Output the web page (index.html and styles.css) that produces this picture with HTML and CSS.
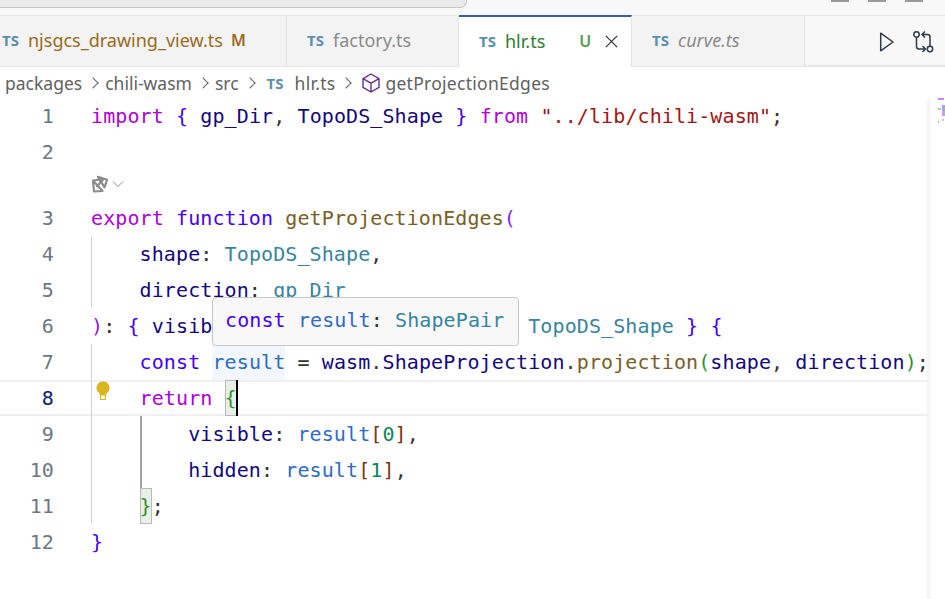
FILE: index.html
```html
<!DOCTYPE html>
<html lang="en">
<head>
<meta charset="utf-8">
<title>hlr.ts</title>
<link rel="stylesheet" href="styles.css">
</head>
<body>
<div class="app">
  <header class="titlebar">
    <div class="search"></div>
    <div class="winctl"><i></i><i></i><i></i></div>
  </header>
  <nav class="tabs">
    <div class="tab t1"><span class="ts">TS</span><span class="name mod">njsgcs_drawing_view.ts</span><span class="badge mod">M</span></div>
    <div class="tab t2"><span class="ts">TS</span><span class="name dim">factory.ts</span></div>
    <div class="tab t3 active"><span class="ts">TS</span><span class="name new">hlr.ts</span><span class="badge new">U</span>
      <svg class="close" viewBox="0 0 16 16" width="15" height="15"><path d="M2 2l12 12M14 2L2 14" stroke="#333" stroke-width="1.400" fill="none"/></svg>
    </div>
    <div class="tab t4"><span class="ts">TS</span><span class="name dim it">curve.ts</span></div>
    <div class="actions">
      <svg viewBox="0 0 20 20" width="20" height="20"><path d="M3.700 1.200v17.600L16 10z" fill="none" stroke="#2f3a4a" stroke-width="1.500" stroke-linejoin="round"/></svg>
      <svg viewBox="0 0 22 22" width="22" height="22"><g fill="none" stroke="#2f3a4a" stroke-width="1.500"><circle cx="4.500" cy="3.500" r="2.700"/><circle cx="18" cy="18" r="2.700"/><path d="M4.500 6.200v9.300c0 1.800 1 2.500 2.500 2.500h5.500M10.500 15l3 3-3 3M18 15.300V6c0-1.800-1-2.500-2.500-2.500H10M13 .5l-3 3 3 3"/></g></svg>
    </div>
  </nav>
  <div class="crumbs">
    <span>packages</span><b class="sep"></b><span>chili-wasm</span><b class="sep"></b><span>src</span><b class="sep"></b>
    <span class="ts small">TS</span><span class="wide">hlr.ts</span><b class="sep"></b>
    <svg class="cube" viewBox="0 0 20 20" width="20" height="20"><path d="M10 1l8 4.600v8.800L10 19l-8-4.600V5.600zM2 5.600l8 4.600 8-4.600M10 10.200V19" fill="none" stroke="#652d90" stroke-width="1.400"/></svg>
    <span class="wide">getProjectionEdges</span>
  </div>
  <main class="editor">
    <div class="line"><span class="num">1</span><code class="code"><span class="kw">import</span> <span class="b1">{</span> <span class="var">gp_Dir</span>, <span class="var">TopoDS_Shape</span> <span class="b1">}</span> <span class="kw">from</span> <span class="str">"../lib/chili-wasm"</span>;</code></div>
    <div class="line"><span class="num">2</span><code class="code"></code></div>
    <div class="lens">
      <svg viewBox="0 0 18 18" width="18" height="18"><g fill="none" stroke="#8c8c8c" stroke-width="2.200" stroke-linejoin="round"><path d="M7 1.800l9 3-2.500 7.500z"/><path d="M2 5.500l9.500 10.500-8.500.5z"/><path d="M2.500 5.500l10-1.500-7 8"/></g></svg>
      <svg viewBox="0 0 12 8" width="12" height="8"><path d="M1 1.500l5 5 5-5" fill="none" stroke="#8a8a8a" stroke-width="1"/></svg>
    </div>
    <div class="line"><span class="num">3</span><code class="code"><span class="kw">export</span> <span class="st">function</span> <span class="fn">getProjectionEdges</span><span class="b0">(</span></code></div>
    <div class="line g1"><span class="num">4</span><code class="code">    <span class="var">shape</span>: <span class="ty">TopoDS_Shape</span>,</code></div>
    <div class="line g1"><span class="num">5</span><code class="code">    <span class="var">direction</span>: <span class="ty">gp_Dir</span></code></div>
    <div class="line"><span class="num">6</span><code class="code"><span class="b0">)</span>: <span class="b1">{</span> <span class="var">visible</span>: <span class="ty">TopoDS_Shape</span>; <span class="var">hidden</span>: <span class="ty">TopoDS_Shape</span> <span class="b1">}</span> <span class="b1">{</span></code></div>
    <div class="line g1"><span class="num">7</span><code class="code">    <span class="st">const</span> <span class="cv hl">result</span> = <span class="var">wasm</span>.<span class="var">ShapeProjection</span>.<span class="fn">projection</span><span class="b2">(</span><span class="var">shape</span>, <span class="var">direction</span><span class="b2">)</span>;</code></div>
    <div class="line g1 current">
      <svg class="bulb" viewBox="0 0 14 20" width="14" height="20"><path d="M7 0.500a6.500 6.500 0 0 1 4 11.600c-.8.700-1 1.300-1 1.900H4c0-.6-.2-1.200-1-1.900A6.500 6.500 0 0 1 7 .500z" fill="#dcb51e"/><path d="M4.500 14h5v4.500h-5z" fill="#fff" stroke="#dcb51e" stroke-width="1.200"/></svg>
      <span class="num now">8</span><code class="code">    <span class="kw">return</span> <span class="b3 match">{</span><span class="caret"></span></code></div>
    <div class="line g1 g2"><span class="num">9</span><code class="code">        <span class="var">visible</span>: <span class="cv">result</span><span class="b4">[</span><span class="n">0</span><span class="b4">]</span>,</code></div>
    <div class="line g1 g2"><span class="num">10</span><code class="code">        <span class="var">hidden</span>: <span class="cv">result</span><span class="b4">[</span><span class="n">1</span><span class="b4">]</span>,</code></div>
    <div class="line g1"><span class="num">11</span><code class="code">    <span class="b3 match">}</span>;</code></div>
    <div class="line"><span class="num">12</span><code class="code"><span class="b1">}</span></code></div>
    <div class="tooltip"><span class="st">const</span> <span class="cv">result</span>: <span class="ty">ShapePair</span></div>
    <div class="minimap">
      <i class="m1"></i><i class="m2"></i><i class="m3"></i><i class="m4"></i><i class="m5"></i><i class="m6"></i>
    </div>
  </main>
</div>
</body>
</html>
```
FILE: styles.css
```css
* { box-sizing: border-box; }
html, body { margin: 0; height: 100%; background: #fff; overflow: hidden; }
.app { width: 945px; height: 599px; display: flex; flex-direction: column; overflow: hidden; font-family: "Noto Sans", sans-serif; }

.titlebar { height: 15px; flex: none; background: #f8f8f8; position: relative; display: flex; justify-content: space-between; }
.search { width: 467px; height: 8px; background: #ebebeb; border-bottom: 1px solid #c6c6c6; border-right: 1px solid #c6c6c6; border-radius: 0 0 7px 0; }
.winctl { display: flex; gap: 19px; margin-right: 22px; }
.winctl i { width: 18px; height: 2px; background: #9a9a9a; }

.tabs { height: 52px; flex: none; display: flex; background: #f8f8f8; border-top: 1px solid #e6e6e6; border-bottom: 2px solid #e6e6e6; }
.tab { height: 50px; flex: none; display: flex; align-items: center; background: #f3f3f3; border-right: 1px solid #e3e3e3; font-size: 18px; position: relative; padding-bottom: 2px; }
.t1 { width: 287px; padding-left: 2px; }
.t2 { width: 172px; padding-left: 20px; }
.t3 { width: 173px; padding-left: 20px; background: #fff; height: 52px; border-top: 2px solid #3a5bb8; margin-top: -1px; }
.t4 { width: 173px; padding-left: 20px; }
.ts { font-weight: 700; font-size: 15px; color: #5b8fb0; margin-right: 8px; width: 18px; }
.crumbs .small { margin: 0 10px 0 5px; }
.name { white-space: nowrap; }
.mod { color: #9a6a22; }
.new { color: #2f7d32; }
.dim { color: #8a8a8a; }
.it { font-style: italic; }
.badge { margin-left: 8px; font-weight: 600; font-size: 16px; }
.t3 .badge { margin-left: 34px; color: #5b9a4e; }
.close { margin-left: 13px; }
.actions { flex: 1; display: flex; align-items: center; justify-content: flex-end; gap: 15px; padding-right: 11px; padding-top: 2px; background: #f8f8f8; }

.crumbs { height: 31px; flex: none; display: flex; align-items: center; padding-left: 5px; font-size: 17.500px; color: #616161; white-space: nowrap; }
.sep { width: 8px; height: 8px; margin: 0 8px 0 7px; border-top: 1.300px solid #616161; border-right: 1.300px solid #616161; transform: rotate(45deg); flex: none; }
.wide { letter-spacing: .28px; }
.cube { margin: 0 4px 0 3px; }

.editor { flex: 1; position: relative; font-family: "DejaVu Sans Mono", monospace; font-size: 20px; letter-spacing: .1px; color: #333; }
.line { height: 36px; display: flex; position: relative; line-height: 36px; }
.num { width: 54px; flex: none; text-align: right; color: #6e7681; }
.now { color: #0b216f; }
.code { font: inherit; margin-left: 37px; white-space: pre; position: relative; z-index: 1; }
.g1::before { content: ""; position: absolute; left: 91px; top: 0; bottom: 0; width: 1px; background: #d3d3d3; }
.g2::after { content: ""; position: absolute; left: 140px; top: 0; bottom: 0; width: 2px; background: #a3a3a3; }
.current { box-shadow: inset 0 2px 0 #f0f0f0, inset 0 -2px 0 #f0f0f0; }
.lens { height: 30px; display: flex; align-items: center; gap: 3px; padding-left: 91px; padding-bottom: 2px; }
.bulb { position: absolute; left: 96px; top: 1px; }

.kw { color: #af00db; }
.st { color: #4400ff; }
.fn { color: #795e26; }
.var { color: #13087e; }
.ty { color: #37849f; }
.cv { color: #2f6cc4; }
.str { color: #a31515; }
.n { color: #098658; }
.b0 { color: #8a1ee6; }
.b1 { color: #4400ff; }
.b2 { color: #319331; }
.b3 { color: #319331; }
.b4 { color: #7b3814; }
.hl { display: inline-block; background: #f2f6fd; height: 36px; vertical-align: top; }
.match { display: inline-block; height: 36px; vertical-align: top; background: #e8efe6; outline: 1px solid #b9b9b9; outline-offset: -1px; }
.caret { display: inline-block; width: 2px; height: 36px; background: #000; vertical-align: top; margin-left: -1px; }

.tooltip { position: absolute; left: 212px; top: 199px; width: 307px; height: 49px; padding: 0 13px; line-height: 44px; background: #f8f8f8; border: 1px solid #c8c8c8; border-radius: 4px; z-index: 5; white-space: pre; text-indent: -1px; }
.minimap { position: absolute; left: 925px; top: 0; width: 20px; height: 501px; z-index: 3; background: linear-gradient(to right, rgba(240,240,240,0), #f1f1f1 5px, #fff 5px); }
.minimap i { position: absolute; display: block; }
.m1 { left: 13px; top: 0; width: 6px; height: 2px; background: #c98ae6; }
.m2 { left: 17px; top: 7px; width: 3px; height: 8px; background: #a9a0ea; }
.m3 { left: 13px; top: 10px; width: 3px; height: 2px; background: #c0c0c0; }
.m4 { left: 17px; top: 13px; width: 3px; height: 5px; background: #c9a0e8; }
.m5 { left: 17px; top: 21px; width: 2px; height: 2px; background: #c8c8c8; }
.m6 { left: 13px; top: 23px; width: 1px; height: 2px; background: #b0b0b0; }
```
